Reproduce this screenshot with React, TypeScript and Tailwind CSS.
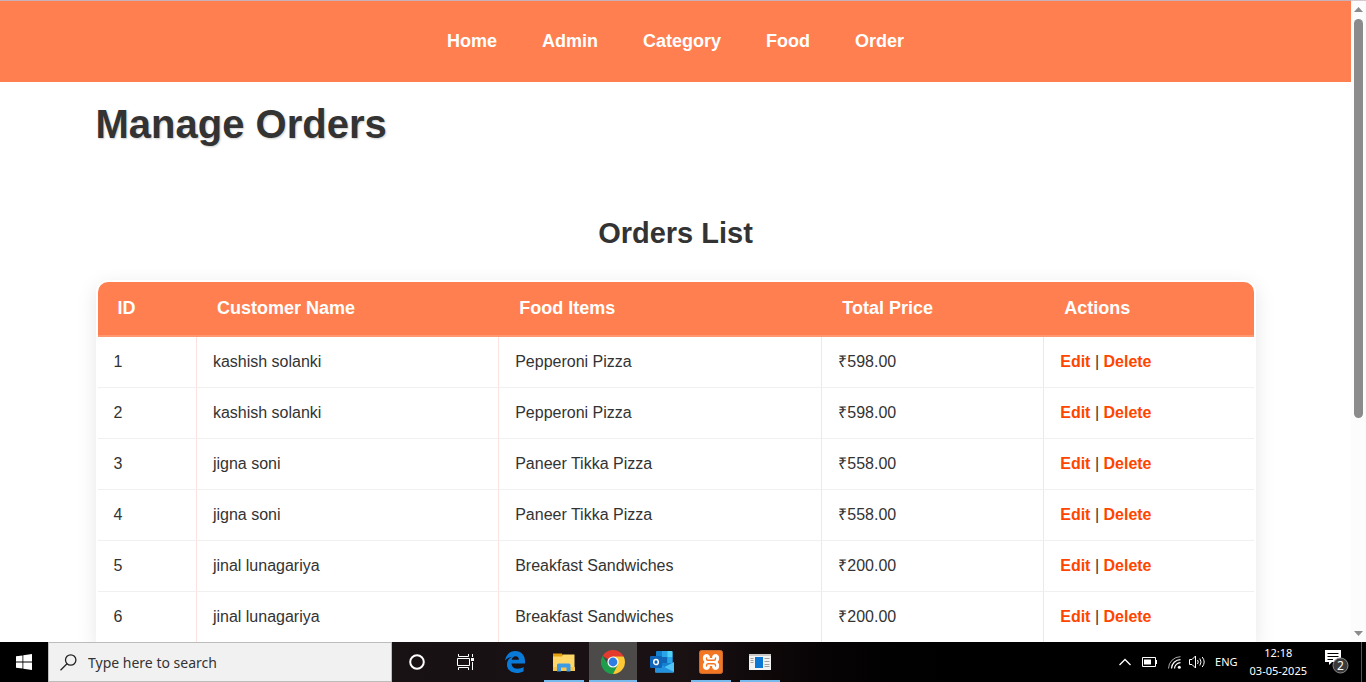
import type { ReactNode } from "react";

const links = ["Home", "Admin", "Category", "Food", "Order"];

const orders = [
  { id: 1, customer: "kashish solanki", food: "Pepperoni Pizza", price: "₹598.00" },
  { id: 2, customer: "kashish solanki", food: "Pepperoni Pizza", price: "₹598.00" },
  { id: 3, customer: "jigna soni", food: "Paneer Tikka Pizza", price: "₹558.00" },
  { id: 4, customer: "jigna soni", food: "Paneer Tikka Pizza", price: "₹558.00" },
  { id: 5, customer: "jinal lunagariya", food: "Breakfast Sandwiches", price: "₹200.00" },
  { id: 6, customer: "jinal lunagariya", food: "Breakfast Sandwiches", price: "₹200.00" },
];

function NavBar() {
  return (
    <nav className="flex h-[82px] items-center justify-center gap-[45px] border-t border-[#c9b0b8] bg-[#ff7f50] pb-[2px] text-lg font-bold text-white">
      {links.map((l) => (
        <a key={l} href="#">
          {l}
        </a>
      ))}
    </nav>
  );
}

function OrdersTable() {
  const th = "border-b-2 border-[#ff9770] px-5 pb-[2px] font-bold";
  const td = "border-b border-b-[#f0f0f0] border-r border-r-[#fde3df] px-4";
  return (
    <div className="rounded-t-xl bg-white p-[2px] shadow-[0_5px_20px_rgba(0,0,0,0.1)]">
      <table className="w-full table-fixed border-separate border-spacing-0 text-left">
        <colgroup>
          <col className="w-[8.6%]" />
          <col className="w-[26.15%]" />
          <col className="w-[27.95%]" />
          <col className="w-[19.2%]" />
          <col />
        </colgroup>
        <thead className="text-lg text-white">
          <tr className="h-[55px]">
            <th className={`${th} rounded-tl-[10px] bg-[#ff7f50]`}>ID</th>
            <th className={`${th} bg-[#ff7f50]`}>Customer Name</th>
            <th className={`${th} bg-[#ff7f50]`}>Food Items</th>
            <th className={`${th} bg-[#ff7f50]`}>Total Price</th>
            <th className={`${th} rounded-tr-[10px] bg-[#ff7f50]`}>Actions</th>
          </tr>
        </thead>
        <tbody className="text-base text-[#333]">
          {orders.map((o) => (
            <tr key={o.id} className="h-[51px]">
              <td className={td}>{o.id}</td>
              <td className={td}>{o.customer}</td>
              <td className={td}>{o.food}</td>
              <td className={td}>{o.price}</td>
              <td className="border-b border-[#f0f0f0] px-4">
                <a href="#" className="font-bold text-[#ff4500]">
                  Edit
                </a>
                {" | "}
                <a href="#" className="font-bold text-[#ff4500]">
                  Delete
                </a>
              </td>
            </tr>
          ))}
        </tbody>
      </table>
    </div>
  );
}

function ScrollBar() {
  return (
    <div className="flex w-[15px] shrink-0 flex-col items-center border-t border-[#d9c8ce] bg-[#fcfcfc] pt-[6px] pb-[6px]">
      <svg width="9" height="5" viewBox="0 0 9 5" aria-hidden="true">
        <path d="M0 5L4.5 0L9 5Z" fill="#8b8b8b" />
      </svg>
      <div className="mt-[7px] h-[399px] max-h-full w-[9px] rounded-full bg-[#8b8b8b]" />
      <svg className="mt-auto" width="9" height="5" viewBox="0 0 9 5" aria-hidden="true">
        <path d="M0 0L4.5 5L9 0Z" fill="#8b8b8b" />
      </svg>
    </div>
  );
}

type TaskButtonProps = { label: string; open?: boolean; active?: boolean; children: ReactNode };

function TaskButton({ label, open, active, children }: TaskButtonProps) {
  return (
    <button
      type="button"
      aria-label={label}
      className={`relative flex h-full w-12 items-center justify-center ${active ? "bg-[#4d4a4a]" : ""}`}
    >
      {children}
      {open && <span className={`absolute bottom-0 h-[2px] bg-[#76b9ed] ${active ? "w-full" : "w-10"}`} />}
    </button>
  );
}

function WindowsLogo() {
  return (
    <svg width="16" height="16" viewBox="0 0 16 16" fill="#fff" aria-hidden="true">
      <path d="M0 2.3L6.5 1.4V7.5H0ZM7.3 1.3L16 0V7.5H7.3ZM0 8.4H6.5V14.6L0 13.7ZM7.3 8.4H16V16L7.3 14.7Z" />
    </svg>
  );
}

function TaskViewIcon() {
  return (
    <svg width="18" height="16" viewBox="0 0 18 16" fill="none" stroke="#fff" aria-hidden="true">
      <path d="M1.500 0V2.500H11.500V0M1.500 16V13.500H11.500V16M0.500 4.500H12.500V11.500H0.500ZM15.500 0V3M15.500 8V16" />
      <path d="M14 4H17V7H14Z" fill="#fff" stroke="none" />
    </svg>
  );
}

function EdgeIcon() {
  return (
    <svg width="20" height="22" viewBox="0 0 20 22" aria-hidden="true">
      <path
        fill="#0a7ad9"
        d="M0 9.7C.7 4 4.600 0 10.300 0C16.500 0 20 4.500 20 10V12.500H6.500C6.700 16 9.400 17.700 12.500 17.700C14.800 17.700 16.900 17.100 18.600 16V20.200C16.700 21.300 14.300 22 11.500 22C5.800 22 2 18.500 2 13.500C2 9.900 4 7.200 7 5.800C4.200 6 1.800 7.300 0 9.700ZM6.700 8.800H13.900C13.900 6.600 12.700 5.200 10.600 5.200C8.500 5.200 7.100 6.700 6.700 8.800Z"
      />
    </svg>
  );
}

function FolderIcon() {
  return (
    <svg width="22" height="19" viewBox="0 0 22 19" aria-hidden="true">
      <path d="M0 0.500H9L10 2.500V5H0Z" fill="#e5a00f" />
      <path d="M0 3.500H9L10 1.500H21.500V18H0Z" fill="#ffd768" />
      <path d="M0 14H22V18H0Z" fill="#f8c64d" />
      <path d="M4 18.500V12Q4 10.500 5.500 10.500H16Q17.500 10.500 17.500 12V18.500H13.500V14.500H8V18.500Z" fill="#3d9be6" />
    </svg>
  );
}

function ChromeIcon() {
  return (
    <svg width="24" height="24" viewBox="0 0 24 24" aria-hidden="true">
      <path d="M12 12L1.600 6A12 12 0 0 1 22.400 6Z" fill="#e33b2e" />
      <path d="M1.600 6A12 12 0 0 0 12 24L17 15L12 12L7.200 14.800Z" fill="#1e9e4a" />
      <path d="M12 6.500H22.650A12 12 0 0 1 12 24L16.800 14.800Z" fill="#fcc934" />
      <circle cx="12" cy="12" r="5.600" fill="#fff" />
      <circle cx="12" cy="12" r="4.400" fill="#2f7de1" />
    </svg>
  );
}

function OutlookIcon() {
  return (
    <svg width="24" height="22" viewBox="0 0 24 22" aria-hidden="true">
      <path d="M6 1Q6 0 7 0H21.500Q22.500 0 22.500 1V17H6Z" fill="#1380d0" />
      <path d="M12 0H17.300V6H12Z" fill="#29a4e6" />
      <path d="M17.300 0H21.500Q22.500 0 22.500 1V6H17.300Z" fill="#4fd0f5" />
      <path d="M12 6H17.300V12H12Z" fill="#1065b5" />
      <path d="M17.300 6H22.500V12H17.300Z" fill="#28a8ea" />
      <path d="M5 11L14.500 16L24 11V20.500Q24 21.500 23 21.500H6Q5 21.500 5 20.500Z" fill="#50c4f4" />
      <path d="M5 11L24 21Q23.500 21.500 23 21.500H6Q5 21.500 5 20.500Z" fill="#2292df" />
      <rect x="0" y="5" width="12" height="12" rx="1" fill="#0f64b8" />
      <ellipse cx="6" cy="11" rx="2.300" ry="2.600" fill="none" stroke="#fff" strokeWidth="1.500" />
    </svg>
  );
}

function XamppIcon() {
  return (
    <svg width="24" height="24" viewBox="0 0 24 24" aria-hidden="true">
      <rect x="0.500" y="0.500" width="23" height="23" rx="2" fill="#f37623" stroke="#c96a30" />
      <path
        d="M10.500 8.500V7.500Q10.500 4.500 7.500 4.500Q4.300 4.500 4.300 8Q4.300 10.300 6 12Q4.300 13.700 4.300 16Q4.300 19.500 7.500 19.500Q10.500 19.500 10.500 16.500V15.500H13.500V16.500Q13.500 19.500 16.500 19.500Q19.700 19.500 19.700 16Q19.700 13.700 18 12Q19.700 10.300 19.700 8Q19.700 4.500 16.500 4.500Q13.500 4.500 13.500 7.500V8.500Z"
        fill="#fff"
        stroke="#fff"
        strokeLinejoin="round"
      />
      <path
        d="M7.500 8V8.500Q7.500 10.300 9 10.300H15Q16.500 10.300 16.500 8.500V8M7.500 16V15.500Q7.500 13.700 9 13.700H15Q16.500 13.700 16.500 15.500V16"
        fill="none"
        stroke="#f37623"
        strokeWidth="1.400"
        strokeLinecap="round"
      />
    </svg>
  );
}

function PanelIcon() {
  return (
    <svg width="22" height="16" viewBox="0 0 22 16" aria-hidden="true">
      <rect width="22" height="16" fill="#f2f2f2" />
      <path d="M0 0H22V2H0Z" fill="#c8c8c8" />
      <rect x="6" y="3" width="8" height="11" fill="#0b76d4" />
      <path d="M1.500 4.500H4.500M1.500 6.500H4.500M1.500 8.500H4.500M15.500 4.500H20.500M15.500 7.500H20.500M15.500 10.500H20.500M15.500 12.500H20.500" stroke="#a0a0a0" />
    </svg>
  );
}

function Tray() {
  return (
    <div className="ml-auto flex h-full items-center text-[11px] text-white">
      <button type="button" aria-label="Show hidden icons">
        <svg width="12" height="8" viewBox="0 0 12 8" fill="none" stroke="#fff" strokeWidth="1.300" aria-hidden="true">
          <path d="M0.500 7L6 1.500L11.500 7" />
        </svg>
      </button>
      <svg className="ml-[11px]" width="15" height="10" viewBox="0 0 15 10" aria-label="Battery" role="img">
        <path d="M0.500 0.500H13.500V9.500H0.500Z" fill="none" stroke="#fff" />
        <path d="M2 2.500H9V7.500H2ZM14 3H15V7H14Z" fill="#fff" />
      </svg>
      <svg className="ml-[11px]" width="13" height="13" viewBox="0 0 13 13" fill="none" stroke="#fff" aria-label="Wireless" role="img">
        <path d="M0.500 12.500A12 12 0 0 1 12.500 0.700" stroke="#aaa" />
        <path d="M3.500 12.500A9 9 0 0 1 12.500 3.700M6.500 12.500A6 6 0 0 1 12.500 6.700" strokeWidth="1.200" />
        <circle cx="11.300" cy="11.300" r="1.500" fill="#fff" stroke="none" />
      </svg>
      <svg className="ml-2" width="17" height="14" viewBox="0 0 17 14" fill="none" stroke="#fff" aria-label="Volume" role="img">
        <path d="M0.500 4.500H3L6.500 1V13L3 9.500H0.500Z" />
        <path d="M8.500 5Q10 7 8.500 9M10.800 3.500Q13.300 7 10.800 10.500M13.200 2Q17.200 7 13.200 12" />
      </svg>
      <span className="ml-[9px]">ENG</span>
      <div className="ml-3 text-center leading-[18px]">
        <div>12:18</div>
        <div>03-05-2025</div>
      </div>
      <button type="button" aria-label="2 notifications" className="ml-[17px]">
        <svg width="26" height="24" viewBox="0 0 26 24" aria-hidden="true">
          <path d="M1 0H17V12H8L5 15V12H1Z" fill="#fff" />
          <path d="M3.500 3.500H14.500M3.500 6.500H14.500M3.500 9.500H9" stroke="#000" />
          <circle cx="16.500" cy="15.500" r="7.500" fill="#3a3a3a" stroke="#8a8a8a" />
          <text x="16.500" y="20" textAnchor="middle" fontSize="12" fill="#fff" stroke="none">
            2
          </text>
        </svg>
      </button>
      <span className="ml-[11px] mr-1 h-full w-px bg-[#555]" />
    </div>
  );
}

function TaskBar() {
  return (
    <footer className="flex h-10 shrink-0 items-center bg-linear-to-r from-[#141213] via-[#1a1113] to-black to-75% font-['Noto_Sans','Open_Sans',sans-serif]">
      <button type="button" aria-label="Start" className="flex h-full w-12 items-center justify-center bg-black">
        <WindowsLogo />
      </button>
      <label className="flex h-full w-[344px] items-center gap-[11px] border border-[#bcbcbc] bg-[#f1f1f1] pl-[11px]">
        <svg width="17" height="17" viewBox="0 0 17 17" fill="none" stroke="#222" strokeWidth="1.300" aria-hidden="true">
          <circle cx="10.700" cy="6" r="5.200" />
          <path d="M7 9.800L0.500 16.300" />
        </svg>
        <input
          type="text"
          aria-label="Search"
          placeholder="Type here to search"
          className="min-w-0 flex-1 bg-transparent pt-[2px] text-sm outline-none placeholder:text-[#333]"
        />
      </label>
      <div className="flex h-full gap-px pl-px">
        <TaskButton label="Cortana">
          <svg width="16" height="16" viewBox="0 0 16 16" fill="none" stroke="#fff" strokeWidth="2" aria-hidden="true">
            <circle cx="8" cy="8" r="6.800" />
          </svg>
        </TaskButton>
        <TaskButton label="Task view">
          <TaskViewIcon />
        </TaskButton>
        <TaskButton label="Edge">
          <EdgeIcon />
        </TaskButton>
        <TaskButton label="File Explorer" open>
          <FolderIcon />
        </TaskButton>
        <TaskButton label="Chrome" open active>
          <ChromeIcon />
        </TaskButton>
        <TaskButton label="Outlook">
          <OutlookIcon />
        </TaskButton>
        <TaskButton label="XAMPP" open>
          <XamppIcon />
        </TaskButton>
        <TaskButton label="Control panel" open>
          <PanelIcon />
        </TaskButton>
      </div>
      <Tray />
    </footer>
  );
}

export default function App() {
  return (
    <div className="flex h-screen flex-col font-['Liberation_Sans',Arial,sans-serif]">
      <div className="flex min-h-0 flex-1">
        <div className="min-w-0 flex-1 overflow-hidden bg-white">
          <NavBar />
          <main className="mx-auto max-w-[1160px] pt-[18px] text-[#333]">
            <h1 className="text-[40px] leading-[48px] font-bold [text-shadow:1px_1px_2px_rgba(0,0,0,0.2)]">
              Manage Orders
            </h1>
            <h2 className="mt-[66px] mb-7 text-center text-[29px] leading-[38px] font-bold">Orders List</h2>
            <OrdersTable />
          </main>
        </div>
        <ScrollBar />
      </div>
      <TaskBar />
    </div>
  );
}
